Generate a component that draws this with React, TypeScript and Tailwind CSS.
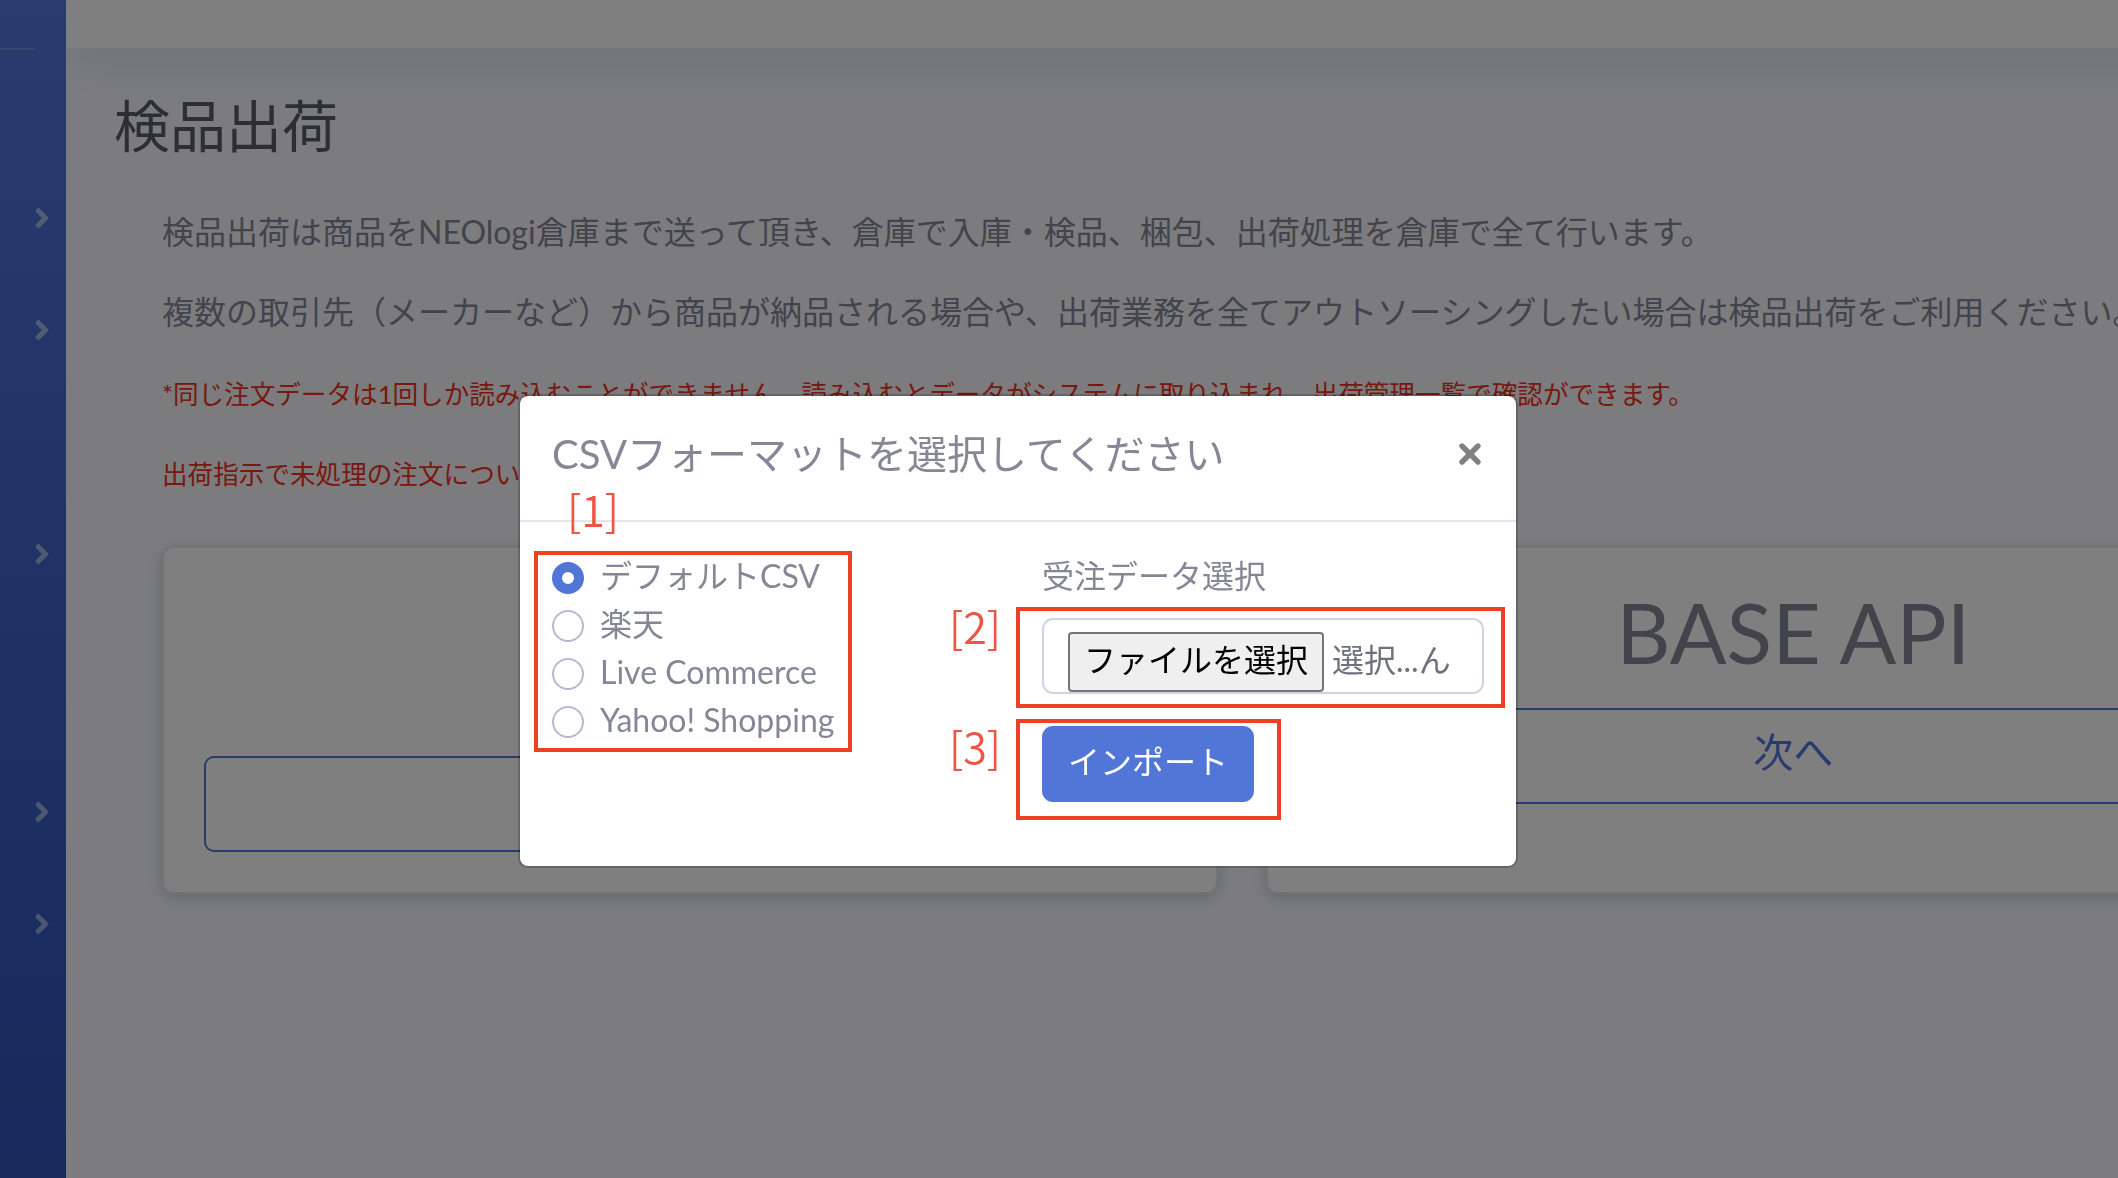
import { useState } from "react";
import { X } from "lucide-react";
import { FaAngleRight } from "react-icons/fa";

const formats = ["デフォルトCSV", "楽天", "Live Commerce", "Yahoo! Shopping"];

const SidebarLink = ({ label }: { label: string }) => (
  <a href="#" aria-label={label} className="flex h-28 items-center justify-end pr-2">
    <FaAngleRight className="h-8 w-8 text-white/50" />
  </a>
);

const Sidebar = () => (
  <nav className="w-[66px] shrink-0 bg-linear-to-b from-[#5277de] to-[#3052b8] pt-12">
    <hr className="mb-28 mr-8 border-t-2 border-white/15" />
    <SidebarLink label="メニュー1" />
    <SidebarLink label="メニュー2" />
    <div className="h-28" />
    <SidebarLink label="メニュー3" />
    <div className="h-[146px]" />
    <SidebarLink label="メニュー4" />
    <SidebarLink label="メニュー5" />
  </nav>
);

const FormatRadios = () => {
  const [selected, setSelected] = useState(formats[0]);

  return (
    <fieldset>
      {formats.map((format) => (
        <label key={format} className="flex h-12 items-center gap-4 whitespace-nowrap">
          <input
            type="radio"
            name="format"
            checked={selected === format}
            onChange={() => setSelected(format)}
            className="h-8 w-8 appearance-none rounded-full border-2 border-[#b7b9cc] bg-white checked:border-[10px] checked:border-[#5275d8]"
          />
          <span className="pb-1">{format}</span>
        </label>
      ))}
    </fieldset>
  );
};

const ImportModal = () => (
  <div className="fixed inset-0 flex items-start justify-center bg-black/50 pr-[82px] pt-[394px]">
    <div
      role="dialog"
      aria-labelledby="modal-title"
      className="relative w-[1000px] rounded-[10px] border-2 border-black/20 bg-white bg-clip-padding"
    >
      <div className="flex items-start justify-between border-b-2 border-[#e3e6f0] py-8 pl-8 pr-[30px]">
        <h2 id="modal-title" className="pb-2 text-[40px] leading-[52px]">
          CSVフォーマットを選択してください
        </h2>
        <button type="button" aria-label="閉じる" className="pt-[10px]">
          <X className="h-8 w-8 text-[#808080]" strokeWidth={4} />
        </button>
      </div>
      <form className="flex justify-between p-8" onSubmit={(e) => e.preventDefault()}>
        <FormatRadios />
        <div className="w-[442px] pb-8">
          <p className="mb-4 pb-1 leading-[44px]">受注データ選択</p>
          <label
            htmlFor="order-file"
            className="mb-8 flex h-[76px] items-start gap-2 overflow-hidden rounded-[11px] border-2 border-[#d1d3e2] px-6 pt-3 text-[#6e707e]"
          >
            <span className="flex h-[60px] items-center rounded-[4px] border-2 border-[#767676] bg-[#efefef] px-[14px] pb-1 text-black">
              ファイルを選択
            </span>
            <span className="pt-1">選択...ん</span>
            <input id="order-file" type="file" aria-label="受注データ選択" className="sr-only" />
          </label>
          <button
            type="submit"
            className="flex h-[76px] items-center rounded-[11px] bg-[#5275d8] px-[26px] pb-1 text-white"
          >
            インポート
          </button>
        </div>
      </form>

      {/* numbered callouts */}
      <div className="pointer-events-none font-['Noto_Sans_CJK_JP',sans-serif] text-[43px] font-[350] leading-[44px] text-[#ee5544]">
        <span className="absolute left-[47px] top-[90px]">[1]</span>
        <span className="absolute left-[429px] top-[207px]">[2]</span>
        <span className="absolute left-[429px] top-[327px]">[3]</span>
        <div className="absolute left-[14px] top-[155px] h-[201px] w-[318px] border-4 border-[#ee4023]" />
        <div className="absolute left-[496px] top-[211px] h-[101px] w-[489px] border-4 border-[#ee4023]" />
        <div className="absolute left-[496px] top-[323px] h-[101px] w-[265px] border-4 border-[#ee4023]" />
      </div>
    </div>
  </div>
);

const App = () => {
  return (
    <div
      lang="ja"
      className="flex min-h-screen overflow-hidden bg-[#f8f9fc] font-['Lato','Noto_Sans_CJK_JP',sans-serif] text-[32px] leading-[48px] text-[#858796]"
    >
      <Sidebar />
      <div className="min-w-0 flex-1 overflow-hidden">
        {/* the page is wider than the window and runs off to the right */}
        <div className="-mr-[299px]">
          <header className="h-12 bg-white shadow-[0_5px_56px_rgba(58,59,69,0.15)]" />
          <main className="px-12 pt-11">
            <h1 className="mb-12 text-[56px] leading-[68px] text-[#5a5c69]">検品出荷</h1>
            <div className="px-12">
              <div className="mb-[50px] space-y-8 whitespace-nowrap">
                <p>
                  検品出荷は商品をNEOlogi倉庫まで送って頂き、倉庫で入庫・検品、梱包、出荷処理を倉庫で全て行います。
                </p>
                <p>
                  複数の取引先（メーカーなど）から商品が納品される場合や、出荷業務を全てアウトソーシングしたい場合は検品出荷をご利用ください。
                </p>
                <p className="pt-1 text-[80%] leading-[44px] text-[#f03020]">
                  *同じ注文データは1回しか読み込むことができません。読み込むとデータがシステムに取り込まれ、出荷管理一覧で確認ができます。
                </p>
                <p className="pt-1 text-[80%] leading-[44px] text-[#f03020]">
                  出荷指示で未処理の注文につい
                </p>
              </div>
              <div className="grid grid-cols-2 gap-12">
                <div className="flex min-h-[348px] flex-col justify-end rounded-[11px] border-2 border-[#e3e6f0] bg-white p-10 shadow-[0_4px_16px_rgba(0,0,0,0.18)]">
                  <button
                    type="button"
                    aria-label="CSVを選択"
                    className="h-24 rounded-[10px] border-2 border-[#5275d8]"
                  />
                </div>
                <div className="flex flex-col rounded-[11px] border-2 border-[#e3e6f0] bg-white p-10 shadow-[0_4px_16px_rgba(0,0,0,0.18)]">
                  <h2 className="mb-8 text-center text-[84px] leading-[88px]">BASE API</h2>
                  <button
                    type="button"
                    className="h-24 rounded-[10px] border-2 border-[#5275d8] pb-2 text-[40px] text-[#5275d8]"
                  >
                    次へ
                  </button>
                </div>
              </div>
            </div>
          </main>
        </div>
      </div>
      <ImportModal />
    </div>
  );
};

export default App;
